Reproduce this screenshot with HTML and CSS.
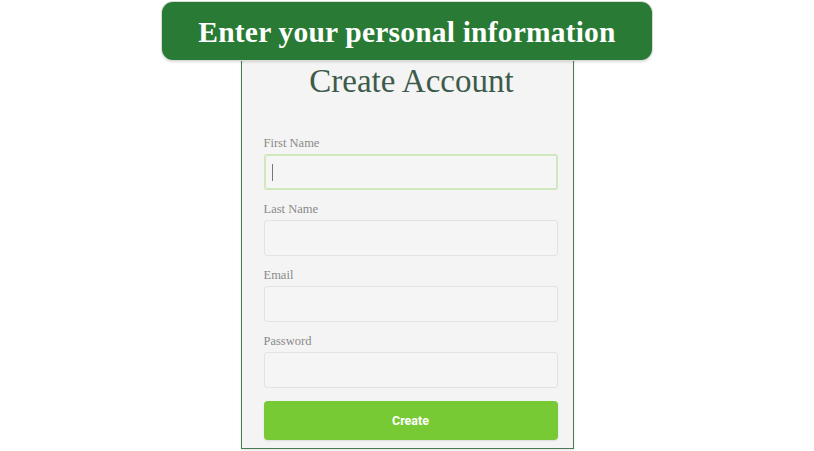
FILE: index.html
```html
<!DOCTYPE html>
<html>
<head>
<meta charset="utf-8">
<link rel="stylesheet" href="styles.css">
</head>
<body>
<div class="page">
  <div class="banner">Enter your personal information</div>
  <div class="card">
    <h1 class="title">Create Account</h1>
    <div class="form">
      <div class="field">
        <label class="label">First Name</label>
        <div class="input focused"><span class="caret"></span></div>
      </div>
      <div class="field">
        <label class="label">Last Name</label>
        <div class="input"></div>
      </div>
      <div class="field">
        <label class="label">Email</label>
        <div class="input"></div>
      </div>
      <div class="field">
        <label class="label">Password</label>
        <div class="input"></div>
      </div>
      <button class="btn">Create</button>
    </div>
  </div>
</div>
</body>
</html>
```
FILE: styles.css
```css
html, body {
  margin: 0;
  padding: 0;
  background: #ffffff;
}
.page {
  width: 814px;
  height: 451px;
  display: flex;
  flex-direction: column;
  align-items: center;
  padding-top: 2px;
  box-sizing: border-box;
  overflow: hidden;
}
.banner {
  position: relative;
  z-index: 2;
  width: 490px;
  height: 58px;
  box-sizing: border-box;
  background: #287a34;
  border-radius: 11px;
  box-shadow: 0 0 0 1px #d8dcd8, 0 2px 3px rgba(0,0,0,0.15);
  color: #ffffff;
  font-family: "Liberation Serif", serif;
  font-weight: bold;
  font-size: 29.5px;
  display: flex;
  align-items: center;
  justify-content: center;
  padding-top: 2px;
  letter-spacing: 0.2px;
}
.card {
  position: relative;
  z-index: 1;
  margin-top: -8px;
  width: 333px;
  height: 397px;
  box-sizing: border-box;
  background: #f4f4f4;
  border: 1px solid #4a7a56;
  border-top: none;
  padding: 0 15px 0 22px;
  display: flex;
  flex-direction: column;
  box-shadow: 0 1px 2px rgba(0,0,0,0.12);
}
.title {
  margin: 12px 0 0 0;
  text-align: center;
  font-family: "Liberation Serif", serif;
  font-weight: normal;
  font-size: 33px;
  color: #3d5b4a;
  line-height: 34px;
  padding-left: 2px;
}
.form {
  margin-top: 38px;
  display: flex;
  flex-direction: column;
}
.field {
  display: flex;
  flex-direction: column;
  margin-bottom: 12px;
}
.label {
  font-family: "Liberation Serif", serif;
  font-size: 12.5px;
  color: #8a8a8a;
  line-height: 14px;
  margin-bottom: 4px;
}
.input {
  height: 36px;
  box-sizing: border-box;
  border: 1px solid #e2e2e2;
  border-radius: 3px;
  background: #f5f5f5;
  display: flex;
  align-items: center;
  padding-left: 8px;
}
.input.focused {
  border: 2px solid #cfe8bd;
  padding-left: 6px;
}
.caret {
  width: 1px;
  height: 17px;
  background: #777;
}
.btn {
  margin-top: 1px;
  height: 39px;
  border: none;
  border-radius: 4px;
  background: #77ca33;
  color: #ffffff;
  font-family: Roboto, "Liberation Sans", sans-serif;
  font-weight: bold;
  font-size: 12.5px;
  box-shadow: 0 1px 2px rgba(0,0,0,0.1);
}
```
